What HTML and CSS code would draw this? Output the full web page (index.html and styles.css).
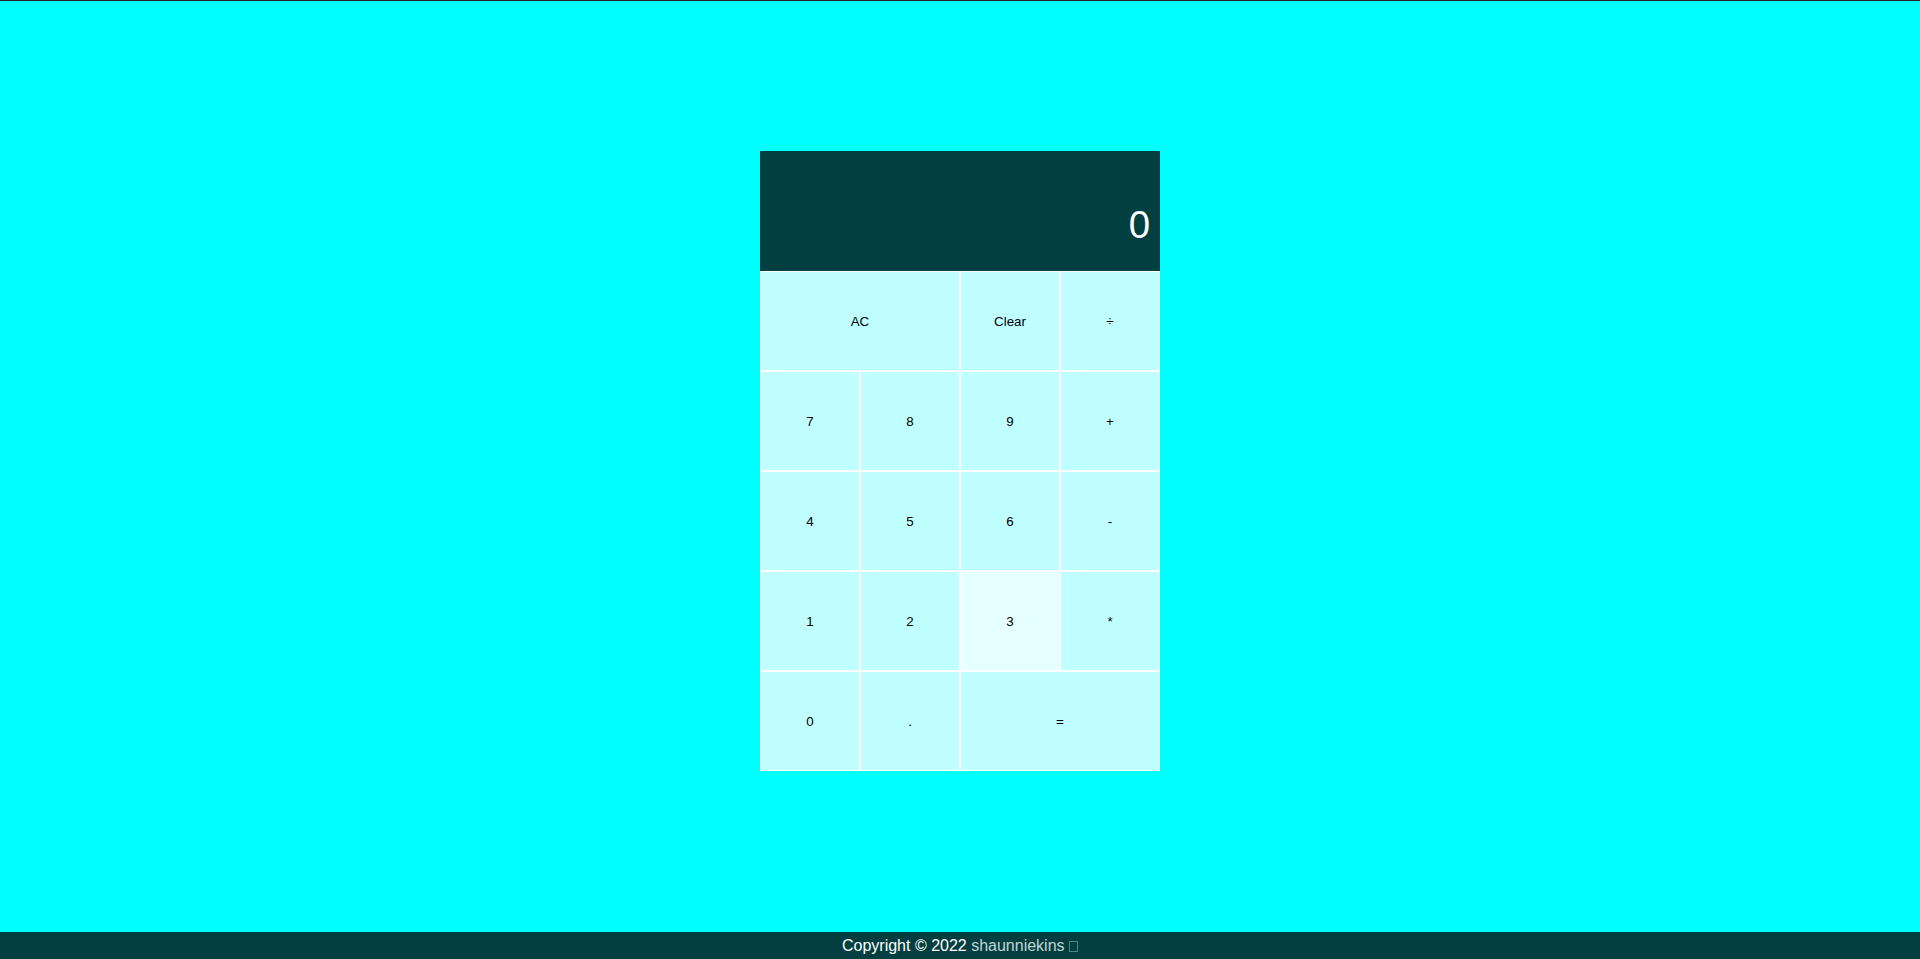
FILE: index.html
```html
<!DOCTYPE html>
<html lang="en">
<head>
<meta charset="utf-8">
<title>Calculator</title>
<link rel="stylesheet" href="styles.css">
</head>
<body>
<main class="stage">
  <div class="calculator-grid">
    <div class="output">
      <div class="previous-operand"></div>
      <div class="current-operand">0</div>
    </div>
    <button class="span-two">AC</button>
    <button>Clear</button>
    <button>÷</button>
    <button>7</button>
    <button>8</button>
    <button>9</button>
    <button>+</button>
    <button>4</button>
    <button>5</button>
    <button>6</button>
    <button>-</button>
    <button>1</button>
    <button>2</button>
    <button class="hover">3</button>
    <button>*</button>
    <button>0</button>
    <button>.</button>
    <button class="span-two">=</button>
  </div>
</main>
<footer class="footer">
  <p class="footer-text">Copyright © 2022 <a class="author" href="#">shaunniekins <span class="tofu"></span></a></p>
</footer>
</body>
</html>
```
FILE: styles.css
```css
*, *::before, *::after {
  box-sizing: border-box;
}

html, body {
  margin: 0;
  padding: 0;
}

body {
  height: 100vh;
  display: flex;
  flex-direction: column;
  background: #00ffff;
  border-top: 1px solid #222;
  font-family: "Liberation Sans", Arial, sans-serif;
}

.stage {
  flex: 1;
  display: flex;
  justify-content: center;
  align-items: flex-start;
  padding-top: 150px;
}

.calculator-grid {
  display: grid;
  grid-template-columns: repeat(4, 100px);
  grid-template-rows: 120px repeat(5, 100px);
}

.calculator-grid > button {
  font-family: "Liberation Sans", Arial, sans-serif;
  font-size: 13.333px;
  color: #000;
  border: 1px solid #fff;
  outline: none;
  background: rgba(255, 255, 255, 0.75);
  cursor: pointer;
  padding: 0;
}

.calculator-grid > button.hover {
  background: rgba(255, 255, 255, 0.9);
}

.span-two {
  grid-column: span 2;
}

.output {
  grid-column: 1 / -1;
  background: rgba(0, 0, 0, 0.75);
  display: flex;
  flex-direction: column;
  align-items: flex-end;
  justify-content: space-around;
  padding: 10px;
  word-wrap: break-word;
  word-break: break-all;
}

.previous-operand {
  color: rgba(255, 255, 255, 0.75);
  font-size: 1.5rem;
}

.current-operand {
  color: #fff;
  font-size: 2.4rem;
}

.footer {
  height: 27px;
  flex: 0 0 27px;
  background: #033f40;
  color: #fff;
  font-size: 16px;
}

.footer-text {
  margin: 0;
  line-height: 27px;
  text-align: center;
}

.author {
  color: #c2d4d4;
  text-decoration: none;
}

.tofu {
  display: inline-block;
  width: 9px;
  height: 11px;
  border: 1px solid #4f8282;
  vertical-align: -1px;
}
```
